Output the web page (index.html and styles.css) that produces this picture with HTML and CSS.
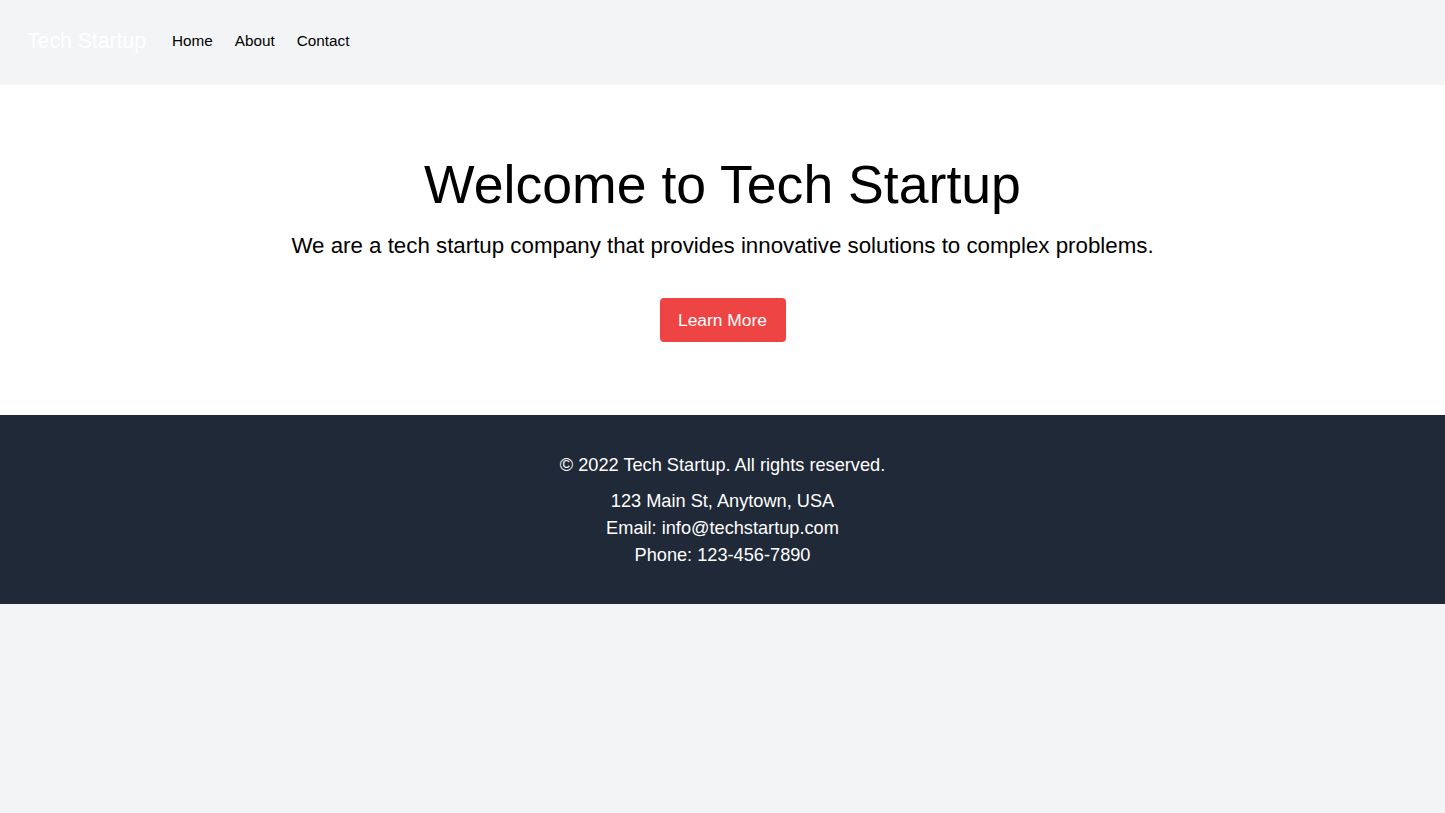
FILE: index.html
```html
<!DOCTYPE html>
<html lang="en">
<head>
<meta charset="utf-8">
<title>Tech Startup</title>
<link rel="stylesheet" href="styles.css">
</head>
<body>
<header class="topbar">
  <a class="brand" href="#">Tech Startup</a>
  <nav class="menu">
    <a href="#">Home</a>
    <a href="#">About</a>
    <a href="#">Contact</a>
  </nav>
</header>
<main class="hero">
  <h1 class="hero-title">Welcome to Tech Startup</h1>
  <p class="hero-sub">We are a tech startup company that provides innovative solutions to complex problems.</p>
  <a class="btn" href="#">Learn More</a>
</main>
<footer class="footer">
  <p class="copy">© 2022 Tech Startup. All rights reserved.</p>
  <p class="contact">123 Main St, Anytown, USA<br>Email: info@techstartup.com<br>Phone: 123-456-7890</p>
</footer>
</body>
</html>
```
FILE: styles.css
```css
html, body {
  margin: 0;
  padding: 0;
}
body {
  background: #f3f4f6;
  font-family: "Liberation Sans", Arial, sans-serif;
  color: #000;
}
a {
  text-decoration: none;
  color: inherit;
}
.topbar {
  height: 85px;
  box-sizing: border-box;
  padding: 0 27px 3px;
  display: flex;
  align-items: center;
  background: #f3f4f6;
}
.brand {
  color: #fff;
  font-size: 21.2px;
  line-height: 28px;
  margin-right: 26px;
}
.menu {
  display: flex;
  gap: 22px;
  font-size: 15.3px;
  line-height: 20px;
}
.hero {
  background: #fff;
  text-align: center;
  padding: 69px 20px 73px;
}
.hero-title {
  margin: 0;
  font-weight: 400;
  font-size: 53.6px;
  line-height: 60px;
}
.hero-sub {
  margin: 18px 0 0;
  font-size: 22.3px;
  line-height: 28px;
}
.btn {
  display: inline-block;
  margin-top: 38px;
  background: #ef4444;
  color: #fff;
  font-size: 17.4px;
  line-height: 28px;
  padding: 8px 0;
  width: 126px;
  border-radius: 4px;
}
.footer {
  background: #1f2937;
  color: #fff;
  text-align: center;
  padding: 37px 20px 35px;
  font-size: 18.2px;
  line-height: 27px;
}
.footer p {
  margin: 0;
}
.footer .contact {
  margin-top: 8.5px;
}
```
